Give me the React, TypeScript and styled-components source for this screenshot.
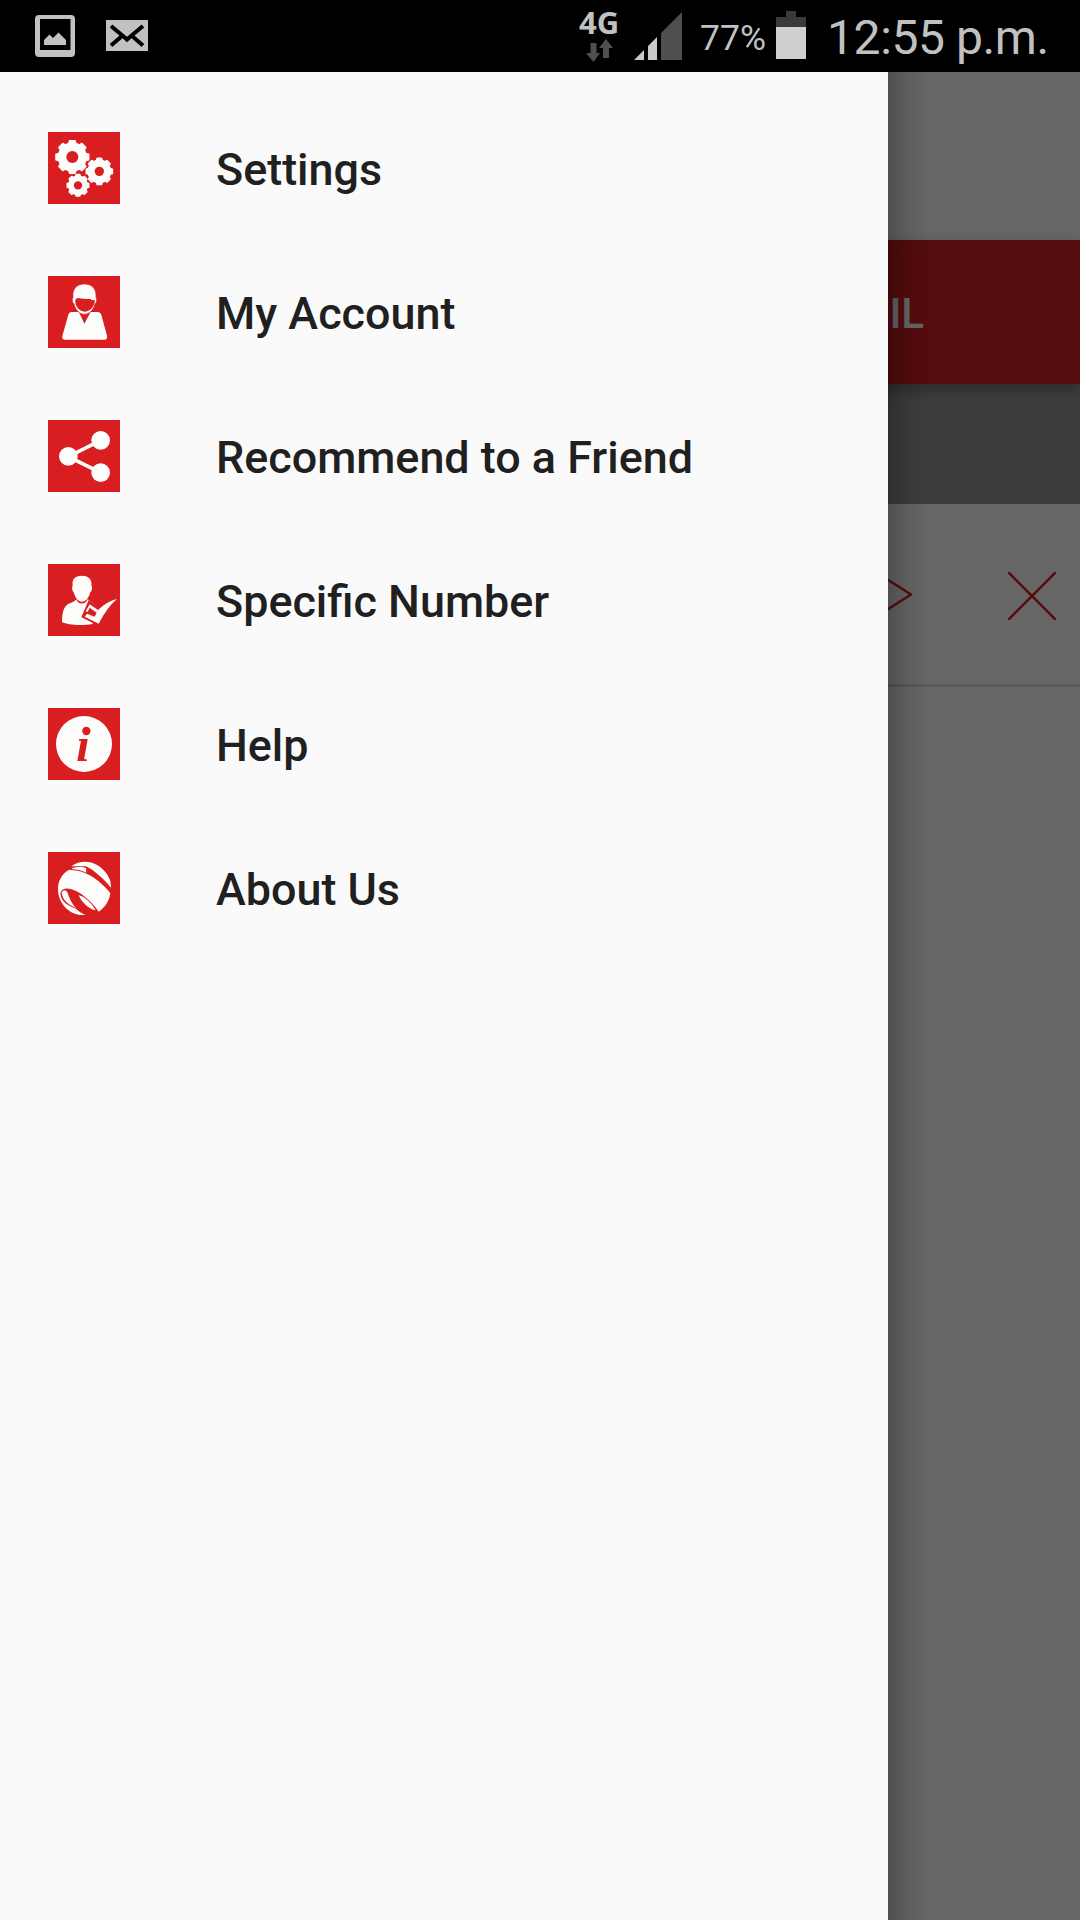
import React from "react";
import styled, { createGlobalStyle } from "styled-components";

const RED = "#d81e20";
const WHITE = "#fdfdfb";

const GlobalStyle = createGlobalStyle`
  * { box-sizing: border-box; }
  body { margin: 0; background: #000; font-family: Roboto, "Liberation Sans", sans-serif; }
`;

const Screen = styled.div`
  width: 1080px;
  height: 1920px;
  display: flex;
  flex-direction: column;
  overflow: hidden;
`;

const StatusBar = styled.header`
  height: 72px;
  flex: none;
  display: flex;
  justify-content: space-between;
  background: #000;
  color: #c1c1c1;
  padding: 0 31px 0 35px;
`;

const StatusGroup = styled.div`
  display: flex;
  align-items: flex-start;
`;

const StatusSvg = styled.svg<{ $top: number; $left?: number }>`
  display: block;
  flex: none;
  margin-top: ${(p) => p.$top}px;
  margin-left: ${(p) => p.$left ?? 0}px;
`;

const Network = styled.div`
  width: 42px;
  display: flex;
  flex-direction: column;
  align-items: center;
`;

const NetworkLabel = styled.span`
  font: 700 31px/32px "Open Sans", "Noto Sans", sans-serif;
  margin-top: 6px;
`;

const BatteryLabel = styled.span`
  width: 66px;
  margin: 17px 0 0 18px;
  font: 400 35.5px/42px Roboto, sans-serif;
  white-space: nowrap;
`;

const Clock = styled.span`
  width: 222px;
  margin: 9px 0 0 21px;
  font: 400 48px/58px Roboto, sans-serif;
  letter-spacing: -0.4px;
  white-space: nowrap;
`;

const Stage = styled.div`
  position: relative;
  flex: 1;
  overflow: hidden;
`;

const Page = styled.div`
  height: 100%;
  display: flex;
  flex-direction: column;
  background: #fff;
  isolation: isolate;
`;

const PageHeader = styled.div`
  height: 168px;
  flex: none;
`;

const TabBar = styled.div`
  height: 144px;
  flex: none;
  z-index: 1;
  display: flex;
  align-items: center;
  justify-content: flex-end;
  padding: 3px 156px 0 0;
  background: #d51e21;
  color: #fff;
  font: 500 42px/50px Roboto, sans-serif;
  box-shadow: 0 6px 14px rgba(0, 0, 0, 0.3);
`;

const SubHeader = styled.div`
  height: 120px;
  flex: none;
  background: #999;
`;

const ListRow = styled.div`
  height: 183px;
  flex: none;
  display: flex;
  justify-content: flex-end;
  align-items: center;
  gap: 96px;
  padding: 4px 24px 0 0;
  border-bottom: 3px solid #e2e2e2;
`;

const Scrim = styled.div`
  position: absolute;
  inset: 0;
  background: rgba(0, 0, 0, 0.6);
`;

const Drawer = styled.nav`
  position: absolute;
  top: 0;
  bottom: 0;
  left: 0;
  width: 888px;
  padding-top: 24px;
  background: #fafafa;
`;

const DrawerShadow = styled.div`
  position: absolute;
  top: 0;
  bottom: 0;
  left: 888px;
  width: 42px;
  background: linear-gradient(to right, rgba(0, 0, 0, 0.24), rgba(0, 0, 0, 0.09) 45%, transparent);
`;

const MenuItem = styled.div`
  height: 144px;
  display: flex;
  align-items: center;
  gap: 96px;
  padding-left: 48px;
`;

const MenuIcon = styled.svg`
  width: 72px;
  height: 72px;
  flex: none;
  background: ${RED};
`;

const MenuLabel = styled.span`
  padding-top: 3px;
  font: 500 44.88px/54px Roboto, sans-serif;
  color: #202020;
  white-space: nowrap;
`;

function gearPath(cx: number, cy: number, outer: number, root: number) {
  const points: string[] = [];
  const teeth = 8;
  for (let i = 0; i < teeth; i++) {
    const mid = (i / teeth) * Math.PI * 2 - Math.PI / 2;
    const corners: [number, number][] = [
      [-0.26, root],
      [-0.17, outer],
      [0.17, outer],
      [0.26, root],
    ];
    for (const [offset, radius] of corners) {
      const a = mid + offset;
      points.push(`${(cx + Math.cos(a) * radius).toFixed(1)} ${(cy + Math.sin(a) * radius).toFixed(1)}`);
    }
  }
  return `M${points.join("L")}Z`;
}

function Gear({ cx, cy, outer, root, hole }: { cx: number; cy: number; outer: number; root: number; hole: number }) {
  return (
    <>
      <path d={gearPath(cx, cy, outer - 2, root - 2)} fill={WHITE} stroke={WHITE} strokeWidth={4} strokeLinejoin="round" />
      <circle cx={cx} cy={cy} r={hole} fill={RED} />
    </>
  );
}

const SettingsIcon = () => (
  <>
    <Gear cx={97} cy={99} outer={52} root={44} hole={18} />
    <Gear cx={178} cy={142} outer={42} root={36} hole={14} />
    <Gear cx={114} cy={184} outer={35} root={30} hole={12.5} />
  </>
);

const AccountIcon = () => (
  <>
    <path
      fill={WHITE}
      d="M94 132H117L133 167L152 132H174Q181 132 184 140L201 203Q203 215 193 215H75Q65 215 67 204L85 140Q87 132 94 132Z"
    />
    <path
      fill={WHITE}
      stroke={RED}
      strokeWidth={2}
      d="M99 88C96 60 113 48 133 48C154 48 170 60 168 88C172 92 170 104 165 108C160 127 147 139 133 139C119 139 107 127 102 108C96 103 95 93 99 88Z"
    />
    <path fill={RED} d="M109 91Q112 93 114 90Q134 94 152 93L154 96L165 97C163 119 148 131 134 131C119 131 104 115 106 97Z" />
  </>
);

const ShareIcon = () => (
  <>
    <path d="M182 85L85 134L182 182" fill="none" stroke={WHITE} strokeWidth={11} />
    <circle cx="85" cy="133" r="28" fill={WHITE} />
    <circle cx="182" cy="85" r="28" fill={WHITE} />
    <circle cx="182" cy="182" r="28" fill={WHITE} />
  </>
);

const NumberIcon = () => (
  <>
    <path fill={WHITE} d="M66 198C66 164 74 146 92 141C101 138 106 134 109 130C114 147 137 147 143 130L162 144L158 204C126 209 84 208 66 198Z" />
    <path
      fill={WHITE}
      d="M98 88C95 67 108 59 126 59C144 59 157 69 154 88C158 94 156 105 151 109C146 127 137 137 126 137C115 137 106 127 101 109C96 105 95 94 98 88Z"
    />
    <path fill={RED} d="M146 132L176 154L182 157L174 204L158 200L124 184Z" />
    <path fill={WHITE} d="M149 145L174 162Q201 136 231 129Q202 153 176 203L134 182L141 173L164 182L170 170L149 155L143 168L137 166Z" />
  </>
);

const HelpIcon = () => (
  <>
    <circle cx="132" cy="132" r="84" fill={WHITE} />
    <circle cx="139" cy="93" r="12.500" fill={RED} />
    <text
      x="129"
      y="182"
      textAnchor="middle"
      fill={RED}
      fontFamily="Liberation Serif, serif"
      fontWeight="700"
      fontStyle="italic"
      fontSize="146"
    >
      ı
    </text>
  </>
);

const AboutIcon = () => (
  <>
    <path fill={WHITE} d="M94 67C125 45 163 51 188 76C207 94 214 114 213 131C193 108 166 80 137 67Z" />
    <path
      fill={WHITE}
      d="M54 140C52 112 66 88 88 77C124 79 151 91 174 110C191 124 204 137 211 148C208 171 195 191 176 203C157 176 130 151 108 141C88 131 66 129 61 148C62 176 91 188 108 194C116 202 126 208 136 213C91 216 57 182 54 140Z"
    />
    <path fill={WHITE} d="M96 73C112 67 128 68 138 72L139 86C125 79 111 76 96 75Z" />
    <path fill={WHITE} d="M65 145C71 137 77 137 82 145C88 164 96 180 108 192C88 184 67 171 65 145Z" />
    <path fill={WHITE} d="M116 154C136 158 157 181 167 199C147 196 126 177 116 154Z" />
  </>
);

const menu: { label: string; Icon: React.FC }[] = [
  { label: "Settings", Icon: SettingsIcon },
  { label: "My Account", Icon: AccountIcon },
  { label: "Recommend to a Friend", Icon: ShareIcon },
  { label: "Specific Number", Icon: NumberIcon },
  { label: "Help", Icon: HelpIcon },
  { label: "About Us", Icon: AboutIcon },
];

export default function App() {
  return (
    <Screen>
      <GlobalStyle />
      <StatusBar>
        <StatusGroup>
          <StatusSvg $top={14} width="40" height="43" viewBox="0 0 40 43">
            <path fill="#c1c1c1" fillRule="evenodd" d="M4 1H36Q40 1 40 5V39Q40 43 36 43H4Q0 43 0 39V5Q0 1 4 1ZM5 5V36H35.500V5Z" />
            <path fill="#c1c1c1" d="M9 31V26L14.500 20.500L18 24L23.500 18.500L31 26V31Z" />
          </StatusSvg>
          <StatusSvg $top={20} $left={31} width="42" height="31" viewBox="0 0 42 31">
            <path fill="#c1c1c1" d="M0 0H42V31H0Z" />
            <path fill="none" stroke="#000" strokeWidth="4" d="M5 6L17 16L21 19.500L25 16L37 6M5 25.500L16 16M37 25.500L26 16" />
          </StatusSvg>
        </StatusGroup>
        <StatusGroup>
          <Network>
            <NetworkLabel>4G</NetworkLabel>
            <StatusSvg $top={1} width="27" height="24" viewBox="0 0 27 24">
              <path fill="#4f4f4f" d="M4.500 4H10.500V14H14L7.500 23L0 14H4.500ZM20 0L27 9H23V19H17V9H13Z" />
            </StatusSvg>
          </Network>
          <StatusSvg $top={12} $left={14} width="48" height="48" viewBox="0 0 48 48">
            <path fill="#c9c9c9" d="M0 48L10 38V48ZM14 34L23 25V48H14Z" />
            <path fill="#4f4f4f" d="M27 21L48 0V48H27Z" />
          </StatusSvg>
          <BatteryLabel>77%</BatteryLabel>
          <StatusSvg $top={11} $left={10} width="30" height="48" viewBox="0 0 30 48">
            <path fill="#3a3a3a" d="M10 0H20V6H30V16H0V6H10Z" />
            <path fill="#cfcfcf" d="M0 16H30V48H0Z" />
          </StatusSvg>
          <Clock>12:55 p.m.</Clock>
        </StatusGroup>
      </StatusBar>
      <Stage>
        <Page>
          <PageHeader />
          <TabBar>IL</TabBar>
          <SubHeader />
          <ListRow>
            <svg width="40" height="48" viewBox="0 0 40 48" fill="none" stroke="#d51e21" strokeWidth="2.500">
              <path d="M2 -1L39 22.500L2 46Z" />
            </svg>
            <svg width="48" height="48" viewBox="0 0 48 48" fill="none" stroke="#d51e21" strokeWidth="2.500">
              <path d="M0 0L48 48M48 0L0 48" />
            </svg>
          </ListRow>
        </Page>
        <Scrim />
        <DrawerShadow />
        <Drawer>
          {menu.map(({ label, Icon }) => (
            <MenuItem key={label}>
              <MenuIcon viewBox="24 24 216 216">
                <Icon />
              </MenuIcon>
              <MenuLabel>{label}</MenuLabel>
            </MenuItem>
          ))}
        </Drawer>
      </Stage>
    </Screen>
  );
}
